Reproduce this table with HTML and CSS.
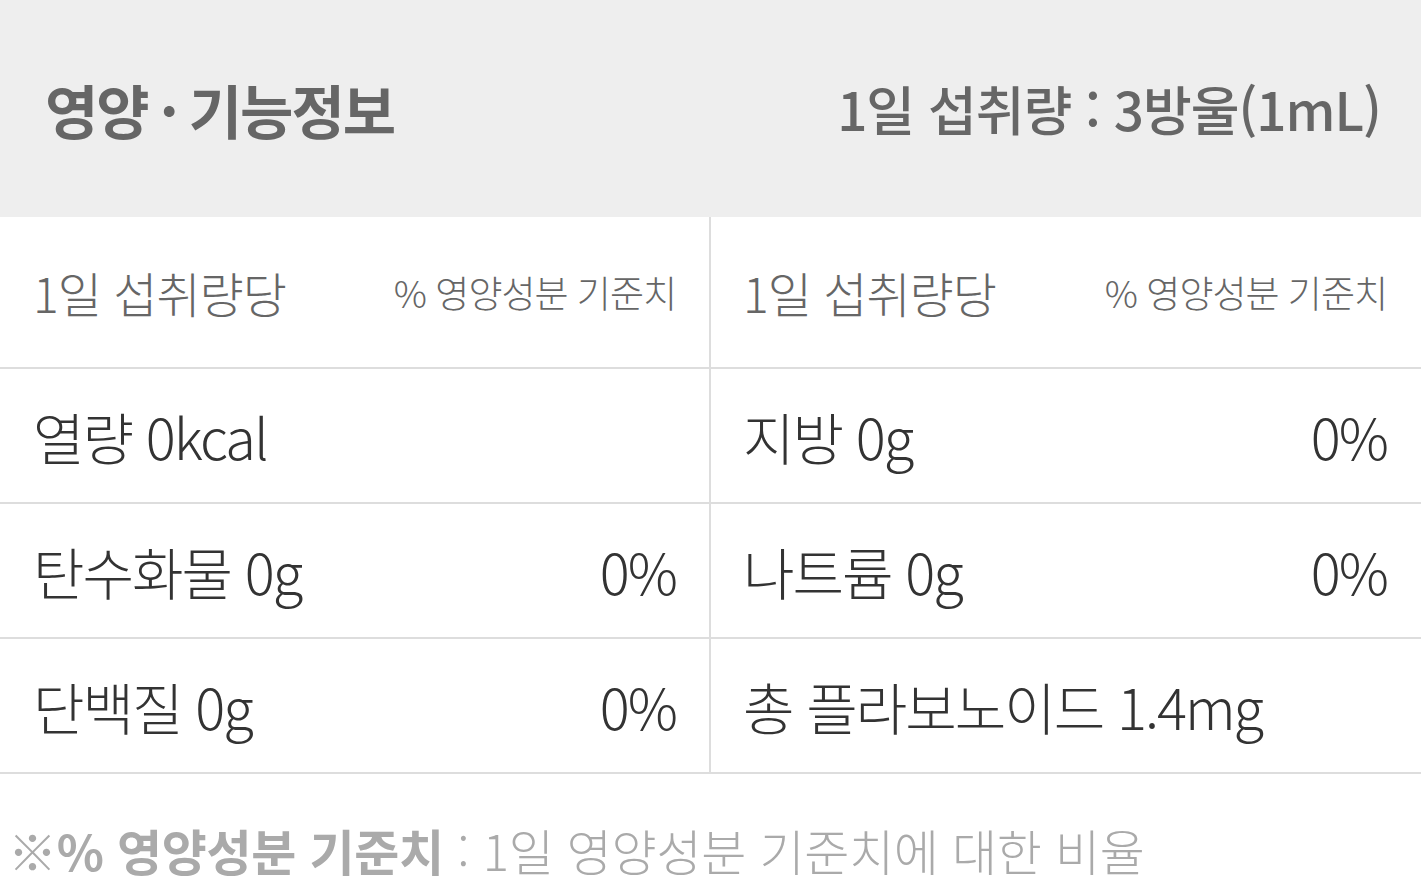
FILE: index.html
```html
<!DOCTYPE html>
<html lang="ko">
<head>
<meta charset="utf-8">
<title>영양·기능정보</title>
<link rel="stylesheet" href="styles.css">
</head>
<body>
<div class="panel">
  <header class="head">
    <h2 class="title">영양<span class="dot">·</span>기능정보</h2>
    <p class="dose">1일 섭취량 : 3방울(1mL)</p>
  </header>
  <div class="table">
    <div class="col">
      <div class="row row-head"><span class="per">1일 섭취량당</span><span class="std">% 영양성분 기준치</span></div>
      <div class="row"><span>열량 0kcal</span><span></span></div>
      <div class="row"><span>탄수화물 0g</span><span>0%</span></div>
      <div class="row"><span>단백질 0g</span><span>0%</span></div>
    </div>
    <div class="col">
      <div class="row row-head"><span class="per">1일 섭취량당</span><span class="std">% 영양성분 기준치</span></div>
      <div class="row"><span>지방 0g</span><span>0%</span></div>
      <div class="row"><span>나트륨 0g</span><span>0%</span></div>
      <div class="row"><span>총 플라보노이드 1.4mg</span><span></span></div>
    </div>
  </div>
  <p class="note"><strong>※% 영양성분 기준치</strong> : 1일 영양성분 기준치에 대한 비율</p>
</div>
</body>
</html>
```
FILE: styles.css
```css
html, body {
  margin: 0;
  padding: 0;
  background: #fff;
}
body {
  font-family: "Noto Sans CJK KR", "Noto Sans", sans-serif;
  width: 1421px;
}
.panel {
  width: 1421px;
}
.head {
  height: 217px;
  background: #eeeeee;
  display: flex;
  align-items: center;
  justify-content: space-between;
  padding: 0 40px 0 45px;
  box-sizing: border-box;
}
.title {
  margin: 0;
  font-size: 58px;
  font-weight: 700;
  line-height: 1;
  color: #666;
  letter-spacing: -2px;
}
.dot {
  margin: 0 12px;
}
.dose {
  margin: 0;
  font-size: 53px;
  font-weight: 500;
  line-height: 1;
  color: #666;
  letter-spacing: -1px;
}
.table {
  display: grid;
  grid-template-columns: 711px 710px;
  border-bottom: 2px solid #dddddd;
}
.col:first-child {
  border-right: 2px solid #dddddd;
}
.row {
  display: flex;
  align-items: center;
  justify-content: space-between;
  height: 133px;
  border-top: 2px solid #dddddd;
  padding: 0 33px 0 33px;
  font-size: 56px;
  font-weight: 300;
  color: #333;
  line-height: 1;
  letter-spacing: -2px;
}
.col:last-child .row {
  padding: 0 34px 0 32px;
}
.row.row-head {
  height: 150px;
  border-top: none;
  color: #666;
}
.per {
  font-size: 48px;
  letter-spacing: -1px;
}
.std {
  font-size: 37px;
  letter-spacing: -1px;
}
.note {
  margin: 0;
  height: 118px;
  box-sizing: border-box;
  padding: 32px 0 0 8px;
  display: flex;
  align-items: center;
  font-size: 49px;
  font-weight: 300;
  color: #aaaaaa;
  line-height: 1;
  letter-spacing: -0.3px;
  white-space: pre;
}
.note strong {
  font-weight: 700;
}
```
